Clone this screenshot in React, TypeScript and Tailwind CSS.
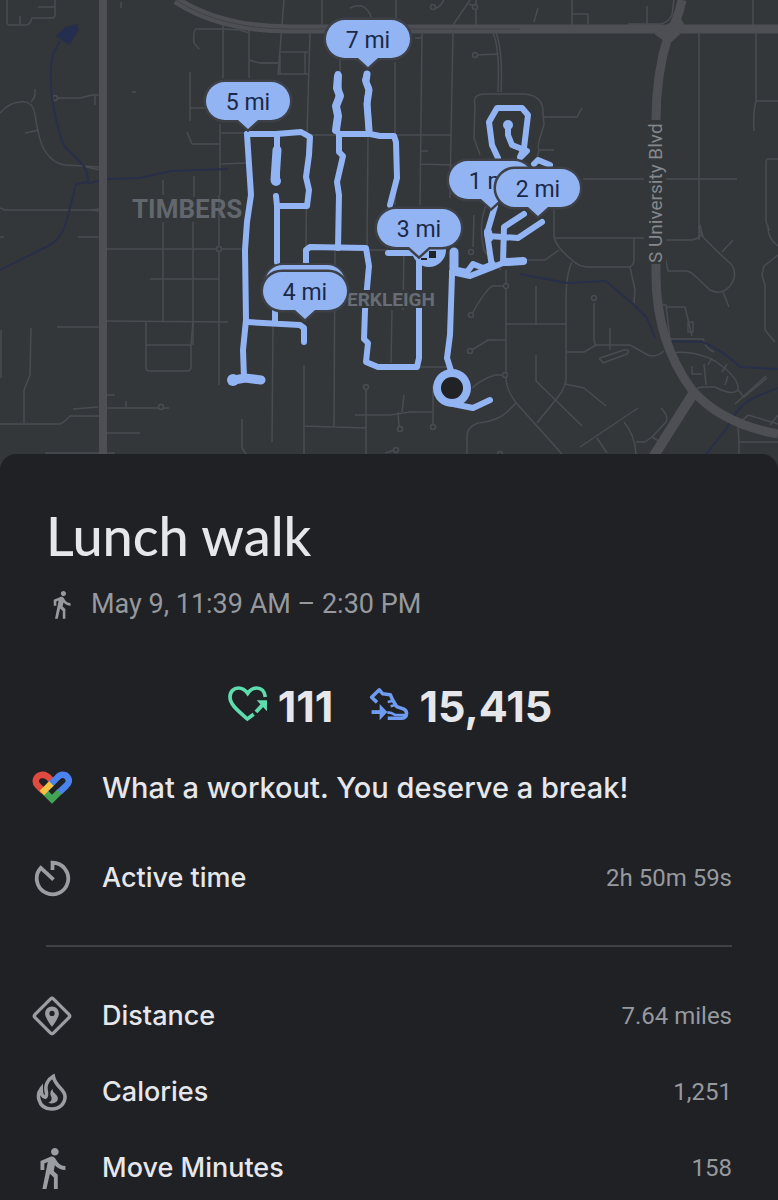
import type { ReactNode } from "react";
import { MdDirectionsWalk } from "react-icons/md";

const minorRoads = [
  // north-west
  "M7 0V22Q7 25 10 25H26Q30 25 32 18H52Q55 18 55 14V0 M20 16V24 M38 7H54 M121 2V8",
  "M0 113Q10 102 20 102Q33 100 35 115Q38 135 42 145Q50 163 65 165L100 167 M82 166L100 170 M25 133L39 130 M35 89Q36 97 31 102",
  "M57 98H80L92 95H100 M95 95V105 M0 208L5 210H90L100 209 M90 210L100 211 M132 92H136",
  "M223 22V78 M249 24V78 M222 29H196Q193 31 194 43L199 49 M222 29L240 30L249 33 M249 60L260 63H278 M190 72V121 M190 108H207 M187 132L192 144H220 M220 124V195 M221 133H247 M221 164L247 163",
  "M163 180V195 M194 176V197 M219 195V385 M163 222V321 M193 222V345 M0 237H4 M78 237H99",
  // west side grid
  "M107 249H241 M150 279H219 M107 321L228 322 M146 322V367Q146 371 150 371H187Q191 371 191 367V345L193 321 M146 345H192",
  "M57 327H99 M1 330V378 M31 328L30 375L24 390V423 M0 424H60Q63 423 66 420L70 416H99 M107 408H169 M73 409L98 407 M126 401V408 M107 395H115 M107 433H140 M45 453H115 M242 419V448L246 454",
  // north centre
  "M284 0L278 75 M322 0V25 M396 0V26 M350 8Q358 4 364 7Q370 12 371 17 M310 33L307 135 M279 52H308 M305 52V74 M278 74H308 M280 55V74 M260 63H277 M340 60V72",
  "M395 62V205 M422 33L420 205 M453 33L451 135L450 198 M415 38H422 M307 135H339 M370 135H451 M421 164L452 165 M421 151H428 M307 135L306 248 M368 135L367 248",
  "M470 0L453 25 M476 0V25 M476 7L469 4 M431 6Q437 12 444 0 M572 0V26 M572 14H588V24 M647 6V26 M538 8L534 22 M674 0L672 15Q668 23 660 24H628 M753 0V25",
  "M493 33Q500 48 498 92 M496 33Q503 50 501 92 M477 55L497 54",
  "M480 155L474 138L475 105Q472 94 485 94H525Q543 96 543 112L544 125Q536 148 539 150L537 158 M544 117H577L582 108 M539 150H554",
  "M699 33V240 M583 179H737 M756 33V101H778 M756 101Q753 112 754 131 M778 159H768Q766 159 766 163V220Q767 228 770 230",
  // centre and south
  "M273 321L272 442 M335 250L334 427 M304 365V454 M303 426L366 428 M366 388V454 M355 415H390L410 412H433 M403 310L404 250 M392 310L391 363 M404 395L402 412 M398 412L399 427 M433 385V425 M418 367H450 M370 250H388 M385 453L395 450",
  "M486 205Q478 226 484 250Q490 260 501 270 M474 215L473 247 M506 270V380Q507 392 518 405L562 454 M505 286H492Q484 292 472 314 M506 324H566 M505 340H488L472 350 M503 375H495Q482 379 472 388 M516 403Q508 412 500 417Q490 422 478 423Q467 427 467 436V454",
  // east
  "M554 190V237Q556 247 572 260Q579 267 588 267H629Q634 266 634 260V238 M554 238H646 M572 262Q566 274 566 300V380Q565 388 558 397L537 423 M525 260H545L559 250 M630 267L635 290L634 303 M536 286V325",
  "M663 240H690Q698 240 702 234Q697 230 700 225L703 237L720 254L732 265Q738 276 730 286Q721 296 710 290L694 275Q690 271 685 271H668Q666 262 664 250 M722 252L733 240 M723 292L729 307",
  "M778 255L764 266L762 275L765 285V330L775 342 M768 225Q767 238 778 246",
  "M594 303V340Q595 345 597 346 M594 345H630L648 355Q656 358 664 351 M566 352H584L596 345 M610 328V350 M600 358L624 350Q631 349 627 354L603 363L599 358",
  "M660 305H666L670 339H703Q706 349 714 352 M667 307H685L692 336 M688 322H693V332H688Z M672 353Q694 350 715 361Q740 378 738 390Q732 396 715 387H703L697 388",
  "M704 364L706 385 M692 366V374H702 M712 358L708 365 M727 364L722 372 M728 376L725 385 M738 390L744 397L767 378",
  "M536 355V381L582 426 M565 384L584 388L606 406 M580 447L638 408 M597 438L607 453 M624 422Q635 435 636 454 M661 408Q669 416 666 422L652 437L645 442H636 M652 437L660 442 M735 404L766 376 M739 454V442L738 425L748 415L778 424 M738 442H778 M770 425L778 415",
];

const culDeSacs: [number, number][] = [
  [55, 98], [219, 249], [161, 407], [475, 55], [475, 7], [433, 7], [366, 387], [400, 429], [433, 427],
  [396, 450], [500, 454], [506, 286], [471, 315], [470, 351], [505, 375], [471, 252], [594, 298],
];

const route = [
  "M247 134L251 195L247 222L245 250L246 320L243 350L244 378",
  "M247 134H276L301 132L310 137L309 155L306 177L309 190L307 206H277",
  "M277 134V180 M276 196L277 206V262 M275 300V322 M247 322L300 325L304 328V342",
  "M306 262V250L310 247L366 248L369 266L365 310L364 339L368 343L366 362L378 367H417L419 358V258",
  "M338 74L339 95L336 105L338 115L336 130L339 134V152L343 156L337 182L339 195L338 248",
  "M339 134H370L380 136H394L396 142L397 178L390 205",
  "M367 74L365 80L369 88L367 100L369 132",
  "M388 253H412 M454 252L452 275L450 335L447 358L452 374",
  "M453 404L473 408L490 400",
  "M452 272L470 276L493 267L503 263L524 261",
  "M457 270L467 272L473 264L483 268L493 264",
  "M495 206L487 233L492 267 M503 263L504 227L524 214 M488 236L518 238L542 222",
  "M498 158L492 145L489 122L497 108H522L528 115L524 148L520 157",
  "M508 125V135L512 145L527 151L521 157 M534 164L538 160L550 165",
];

function MilePin({ x, y, label }: { x: number; y: number; label: string }) {
  return (
    <g transform={`translate(${x} ${y})`}>
      <path
        d="M-23 0H23A19 19 0 0 1 23 38H10L0 47L-10 38H-23A19 19 0 0 1-23 0Z"
        fill="#92b4f3"
        stroke="#3d4147"
        strokeWidth="5"
        paintOrder="stroke"
      />
      <text y="28" textAnchor="middle" fill="#1b2948" fontSize="23">
        {label}
      </text>
    </g>
  );
}

function RouteMap() {
  return (
    <svg
      viewBox="0 0 778 470"
      className="block h-auto w-full bg-[#33373a] font-['Roboto',sans-serif]"
      role="img"
      aria-label="Map of the walking route"
    >
      <g fill="none" stroke="#494c51" strokeWidth="1.5" strokeLinejoin="round">
        {minorRoads.map((d) => (
          <path key={d} d={d} />
        ))}
        {culDeSacs.map(([cx, cy]) => (
          <circle key={`${cx}-${cy}`} cx={cx} cy={cy} r="2.5" fill="#33373a" />
        ))}
      </g>
      <g fill="none" stroke="#282f49" strokeWidth="2">
        <path d="M60 41L53 54Q49 70 52 98Q56 125 64 146L82 164Q88 170 88 183L100 181 M107 179L140 178Q160 173 172 171L228 169 M88 182L76 184L67 220Q62 238 50 245L0 270" />
        <path d="M520 274L567 283L606 281Q618 292 632 303L647 318L655 338 M668 341L703 342Q725 352 740 367L778 369 M706 454L727 428Q738 405 755 397L778 388" />
        <path d="M57 36L65 28L77 25L78 30L69 44Z" fill="#232e50" />
      </g>
      <g fill="none" stroke="#4e4f55">
        <path d="M103 0V470" strokeWidth="8" />
        <path d="M176 0Q220 29 290 29H778" strokeWidth="9" />
        <path d="M682 0Q678 20 668 36Q656 75 656 120V270Q655 340 692 390Q722 424 778 434" strokeWidth="9" />
        <path d="M693 394L655 454L646 470" strokeWidth="10" />
        <path d="M655 34L669 44L686 28L680 18L667 25Z" fill="#4e4f55" strokeWidth="1" />
        <path d="M176 0Q220 29 290 29H520" stroke="#3e4146" strokeWidth="1" />
      </g>
      <rect x="644" y="120" width="22" height="144" fill="#33373a" />
      <text transform="translate(662 263) rotate(-90)" fill="#85888d" fontSize="19">
        S University Blvd
      </text>
      <text x="132" y="218" fontSize="26" fontWeight="700" fill="#62676e">
        TIMBERS
      </text>
      <g fill="none" stroke="#92b4f3" strokeWidth="6" strokeLinejoin="round" strokeLinecap="round">
        {route.map((d) => (
          <path key={d} d={d} />
        ))}
        <path d="M277 150L275 180" strokeWidth="9" />
        <path d="M454 252V266" strokeWidth="9" />
        <path d="M338 76L337 88L340 96L336 106L338 116L336 130" strokeWidth="8" />
        <path d="M367 74L366 82L369 90L367 104L369 130" strokeWidth="7" />
        <path d="M234 380L245 378L261 380" strokeWidth="9" />
        <path d="M506 262L523 261 M488 232L489 238" strokeWidth="8" />
      </g>
      <g fill="#92b4f3">
        <circle cx="233" cy="380" r="6" />
        <circle cx="276" cy="181" r="5" />
        <circle cx="508" cy="125" r="5" />
        <circle cx="429" cy="250" r="17" />
        <circle cx="452" cy="388" r="19" />
      </g>
      <path d="M429 251H436V258H429Z M421 258H427V260H421Z" fill="#202226" />
      <circle cx="452" cy="388" r="11" fill="#202226" />
      <rect x="346" y="290" width="90" height="18" fill="#33373a" />
      <text x="347" y="306" fontSize="19" fontWeight="700" fill="#686d75">
        ERKLEIGH
      </text>
      <rect x="264" y="264" width="82" height="38" rx="19" fill="#92b4f3" stroke="#3d4147" strokeWidth="2" />
      <MilePin x={368} y={20} label="7 mi" />
      <MilePin x={248} y={82} label="5 mi" />
      <MilePin x={491} y={161} label="1 mi" />
      <MilePin x={538} y={169} label="2 mi" />
      <MilePin x={419} y={209} label="3 mi" />
      <MilePin x={305} y={272} label="4 mi" />
    </svg>
  );
}

function HeartPointsIcon() {
  return (
    <svg viewBox="0 0 120 112" className="mb-1 size-10" aria-hidden="true">
      <path
        d="M77 87L58 101C30 76 6 58 6 35C6 18 18 8 31 8C43 8 52 14 59 24C66 14 75 8 86 8C100 8 110 18 112 35"
        fill="none"
        stroke="#5fdcae"
        strokeWidth="11"
      />
      <path d="M84 80L106 56" stroke="#5fdcae" strokeWidth="12" />
      <path d="M86 45H117V78Z" fill="#5fdcae" />
    </svg>
  );
}

function StepsIcon() {
  return (
    <svg viewBox="0 0 124 104" className="mb-1 size-10" aria-hidden="true">
      <g fill="none" stroke="#6f9cf0" strokeWidth="11" strokeLinejoin="round">
        <path d="M25 47L8 31L32 8L42 20L66 23L73 39L86 60L108 68C120 74 120 94 102 96H58" />
        <path d="M57 78L70 80L81 86H114 M58 46L76 42 M67 59L84 54" strokeWidth="8" />
        <path d="M8 77H38" strokeWidth="12" />
      </g>
      <path d="M33 52L57 77L33 102Z" fill="#6f9cf0" />
    </svg>
  );
}

function FitLogo() {
  return (
    <svg viewBox="0 0 118 100" className="h-[34px] w-10" aria-hidden="true">
      <g fill="none" strokeWidth="19">
        <path d="M34 60L17 43C5 30 12 12 32 11C45 11 51 21 61 31" stroke="#e04a3f" />
        <path d="M36 60L59 83L84 58" stroke="#43a453" />
        <path d="M51 43L76 18C84 9 97 9 104 17C112 26 109 36 101 43L81 62" stroke="#4b83ee" />
        <path d="M29 65L57 37" stroke="#f6c244" />
      </g>
    </svg>
  );
}

function TimerIcon() {
  return (
    <svg viewBox="0 0 108 108" className="size-[37px]" aria-hidden="true">
      <path d="M54 29V8A46 46 0 1 1 20 23L57 57" fill="none" stroke="currentColor" strokeWidth="11" />
    </svg>
  );
}

function DistanceIcon() {
  return (
    <svg viewBox="0 0 122 122" className="size-10" aria-hidden="true">
      <rect x="21" y="21" width="80" height="80" rx="7" transform="rotate(45 61 61)" fill="none" stroke="currentColor" strokeWidth="10" />
      <path
        d="M61 32C49 32 40 41 40 53C40 68 61 94 61 94S82 68 82 53C82 41 73 32 61 32ZM61 45A8 8 0 1 1 61 61A8 8 0 1 1 61 45Z"
        fill="currentColor"
        fillRule="evenodd"
      />
    </svg>
  );
}

function FlameIcon() {
  return (
    <svg viewBox="0 0 98 120" className="h-10 w-8" aria-hidden="true">
      <path
        d="M16 50C8 60 6 72 9 83C14 102 29 112 48 112C72 112 89 96 89 74C89 50 60 46 53 12C35 22 28 40 31 56C33 66 34 74 28 76C20 75 16 64 16 50Z"
        fill="none"
        stroke="currentColor"
        strokeWidth="11"
      />
      <path d="M51 51C49 64 68 67 67 81C66 93 53 98 37 93C49 89 50 81 45 71C42 62 45 55 51 51Z" fill="currentColor" />
    </svg>
  );
}

function MetricRow({ icon, label, value }: { icon: ReactNode; label: string; value: string }) {
  return (
    <div className="flex h-12 items-center">
      <dt className="flex items-center gap-[30px] text-[27px] font-medium">
        <span className="flex w-10 justify-center text-[#9a9da2]">{icon}</span>
        {label}
      </dt>
      <dd className="ml-auto font-['Roboto',sans-serif] text-2xl text-[#96999e]">{value}</dd>
    </div>
  );
}

export default function App() {
  return (
    <div className="min-h-screen bg-[#202125] font-['Inter',sans-serif] text-[#e6e7eb]">
      <RouteMap />
      <main className="relative -mt-4 rounded-t-2xl bg-[#202125] pt-12 pr-[46px] pb-2 pl-8">
        <header className="pl-3.5">
          <h1 className="font-['Lato',sans-serif] text-[54px] leading-[68px] font-medium">Lunch walk</h1>
          <p className="mt-[18px] flex h-8 items-center gap-3.5 font-['Roboto',sans-serif] text-[27px] text-[#96999e]">
            <MdDirectionsWalk className="size-[31px]" aria-hidden="true" />
            May 9, 11:39 AM – 2:30 PM
          </p>
        </header>

        <div className="mt-[62px] flex h-12 items-center justify-center gap-9 pl-4 text-[43px] font-bold">
          <div className="flex items-center gap-2.5">
            <HeartPointsIcon />
            <span>111</span>
          </div>
          <div className="flex items-center gap-2.5">
            <StepsIcon />
            <span>15,415</span>
          </div>
        </div>

        <p className="mt-[34px] flex h-12 items-center gap-[30px] text-[29px] font-medium">
          <FitLogo />
          What a workout. You deserve a break!
        </p>

        <dl className="mt-[42px]">
          <MetricRow icon={<TimerIcon />} label="Active time" value="2h 50m 59s" />
        </dl>
        <hr className="mt-[43px] ml-3.5 border-t-2 border-[#404145]" />
        <dl className="mt-[45px] flex flex-col gap-7">
          <MetricRow icon={<DistanceIcon />} label="Distance" value="7.64 miles" />
          <MetricRow icon={<FlameIcon />} label="Calories" value="1,251" />
          <MetricRow
            icon={<MdDirectionsWalk className="size-[46px] shrink-0" aria-hidden="true" />}
            label="Move Minutes"
            value="158"
          />
        </dl>
      </main>
    </div>
  );
}
